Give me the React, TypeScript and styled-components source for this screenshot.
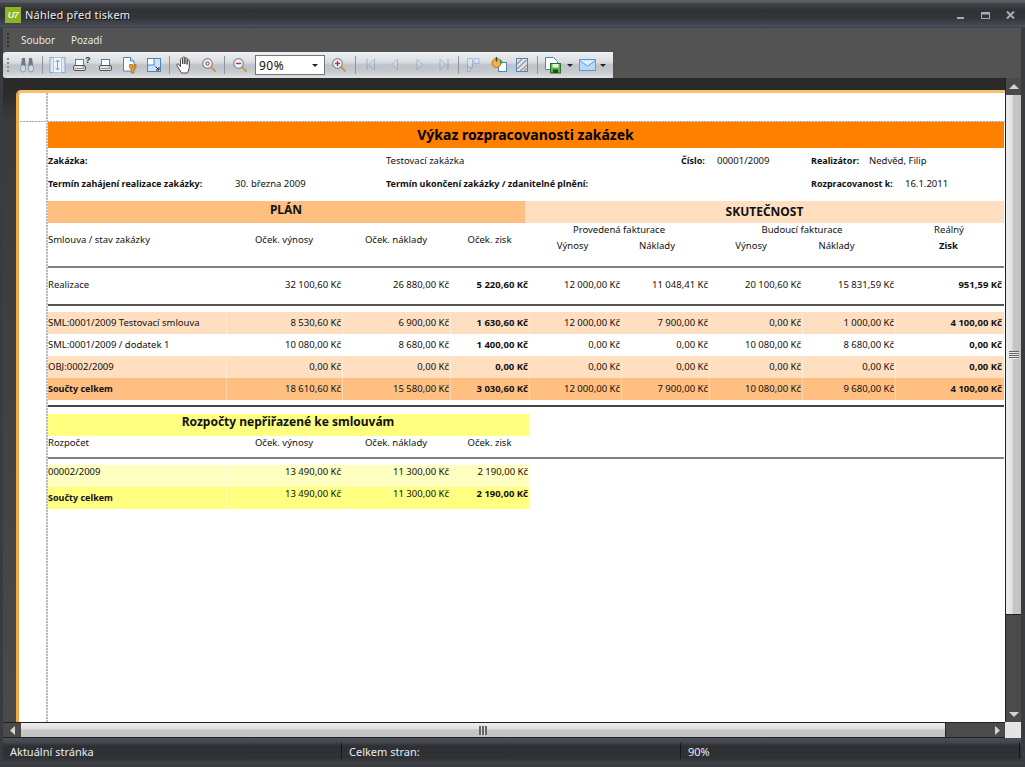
import React from "react";
import styled, { createGlobalStyle, css } from "styled-components";

const Global = createGlobalStyle`
  html, body { margin: 0; padding: 0; background: #35373b; }
  * { box-sizing: border-box; }
`;
const UI = `"Noto Sans", "Open Sans", "DejaVu Sans", sans-serif`;

const Window = styled.div`
  width: 1025px; height: 767px; overflow: hidden; display: flex; flex-direction: column;
  background: #393b40; font-family: ${UI};
`;
const TitleBar = styled.div`
  height: 28px; flex: none; display: flex; align-items: center; padding: 1px 9px 0 5px; gap: 4px;
  background: linear-gradient(180deg, #5b5e64 0, #5b5e64 2px, #44474c 3px, #2f3135 10px, #33353a 18px, #4b4f59 27px, #33353a 28px);
`;
const AppLogo = styled.div`
  width: 16px; height: 16px; background: #8db324; display: flex; align-items: center; justify-content: center;
  font: italic bold 9px "Liberation Sans", sans-serif; color: #f0f3e6; letter-spacing: -0.5px;
`;
const TitleText = styled.div`
  flex: 1; color: #eeeeee; font-size: 11px; letter-spacing: 0.02em; text-shadow: 1px 1px 0 #111;
`;
const WinBtns = styled.div`display: flex; height: 8px; align-items: flex-end; margin-right: 1px;`;
const WinBtn = styled.svg<{ $ml?: number }>`display: block; margin-left: ${(p) => p.$ml ?? 0}px;`;
const Client = styled.div`
  flex: 1; min-height: 0; margin: 0 4px 3px 3px; display: flex; flex-direction: column;
`;
const MenuBar = styled.div`
  height: 24px; flex: none; display: flex; align-items: center; background: #535353;
  color: #e8e8e8; font-size: 10px; padding-left: 18px; gap: 16px; position: relative;
`;
const Grip = styled.div<{ $light?: boolean }>`
  width: 2px; height: 14px; flex: none;
  background: repeating-linear-gradient(180deg, ${(p) => (p.$light ? "#8b8f93" : "#2e2e2e")} 0 2px, transparent 2px 4px);
`;
const MenuGrip = styled(Grip)`position: absolute; left: 4px; top: 5px;`;
const ToolRow = styled.div`height: 26px; flex: none; background: #535353; display: flex;`;
const Toolbar = styled.div`
  width: 610px; height: 26px; display: flex; align-items: center; padding-left: 4px;
  border-radius: 3px 0 0 3px;
  background: linear-gradient(180deg, #eef0f1 0, #dadde0 40%, #bfc3c8 50%, #c6cace 75%, #dfe1e3 100%);
`;
const Tool = styled.div<{ $ml?: number; $off?: boolean }>`
  width: 20px; height: 20px; flex: none; display: flex; align-items: center; justify-content: center;
  margin-left: ${(p) => p.$ml ?? 0}px; opacity: ${(p) => (p.$off ? 0.38 : 1)};
`;
const Sep = styled.div<{ $ml: number }>`
  width: 1px; height: 18px; flex: none; background: #8f9498; margin-left: ${(p) => p.$ml}px;
`;
const Combo = styled.div<{ $ml: number }>`
  width: 70px; height: 20px; flex: none; margin-left: ${(p) => p.$ml}px; background: #fff; border: 1px solid #70767c;
  display: flex; align-items: center; justify-content: space-between; padding: 0 6px 0 3px;
  font-size: 12px; color: #111; letter-spacing: .04em;
`;
const Caret = styled.div<{ $ml?: number }>`
  width: 0; height: 0; flex: none; border: 3px solid transparent; border-top: 3px solid #222; border-bottom: 0;
  margin-left: ${(p) => p.$ml ?? 0}px;
`;
const Body = styled.div`
  flex: 1; min-height: 0; display: grid; grid-template-columns: 1fr 16px; grid-template-rows: 1fr 16px;
`;
const Viewport = styled.div`
  min-height: 0; padding: 12px 0 0 13px; overflow: hidden;
  background: linear-gradient(180deg, #2a2a2a 0, #2a2a2a 12px, #3a3a3a 40px, #4a4a4a 100%);
`;
const Sheet = styled.div`
  position: relative; height: 100%; background: #fff; overflow: hidden;
  border-left: 3px solid #f2a64c; border-top: 3px solid #f6c06c; border-top-left-radius: 5px;
  padding: 29px 0 0 28px;
  &::before { content: ""; position: absolute; left: 27px; top: 0; bottom: 0; width: 2px; z-index: 2;
    background: repeating-linear-gradient(180deg, #bdbdbd 0 2px, #ececec 2px 3px); }
  &::after { content: ""; position: absolute; left: 1px; right: 0; top: 28px; height: 1px; z-index: 2;
    background: repeating-linear-gradient(90deg, #a9a9a9 0 2px, #e4e4e4 2px 3px); }
`;
const Report = styled.div`
  width: 957px; font-family: "Noto Sans", "Open Sans", sans-serif; font-size: 9.5px; color: #111; line-height: 12px;
`;
const Banner = styled.div`
  height: 26px; background: #ff7f00; text-align: center; color: #000; font-size: 14px; font-weight: 700; line-height: 25px;
`;
const InfoGrid = styled.div`
  display: grid; height: 53px; padding-top: 2px; align-items: center;
  grid-template-columns: 188px 151px 295px 36px 94px 58px 36px 99px; grid-template-rows: 22px 23px;
`;
const Info = styled.div<{ $b?: boolean; $c: number; $s?: number; $r: number }>`
  padding-left: ${(p) => (p.$c === 1 ? 1 : 0)}px; white-space: nowrap; font-weight: ${(p) => (p.$b ? 700 : 400)};
  font-size: ${(p) => (p.$b ? 9 : 9.5)}px;
  grid-column: ${(p) => p.$c} / span ${(p) => p.$s ?? 1}; grid-row: ${(p) => p.$r};
`;
const Bands = styled.div`display: flex; height: 22px;`;
const Band = styled.div<{ $w: number; $bg: string; $dy: number }>`
  width: ${(p) => p.$w}px; background: ${(p) => p.$bg}; text-align: center; font-weight: 700; font-size: 12px;
  line-height: ${(p) => p.$dy}px;
`;
const COLS = "179px 116px 108px 79px 92px 88px 93px 93px 108px";
const Head = styled.div`
  display: grid; grid-template-columns: ${COLS}; grid-template-rows: 13px 19px; height: 43px; align-items: center;
`;
const HeadCell = styled.div<{ $c: number; $s?: number; $r: string; $shift?: number; $b?: boolean; $left?: boolean; $dy?: number }>`
  grid-column: ${(p) => p.$c} / span ${(p) => p.$s ?? 1}; grid-row: ${(p) => p.$r};
  text-align: ${(p) => (p.$left ? "left" : "center")}; padding-left: ${(p) => (p.$left ? 1 : 0)}px;
  padding-right: ${(p) => p.$shift ?? 0}px; font-weight: ${(p) => (p.$b ? 700 : 400)};
  padding-top: ${(p) => p.$dy ?? 0}px; white-space: nowrap;
`;
const Rule = styled.div<{ $c?: string; $mt?: number; $mb?: number }>`
  height: 2px; background: ${(p) => p.$c ?? "#808080"}; margin-top: ${(p) => p.$mt ?? 0}px; margin-bottom: ${(p) => p.$mb ?? 0}px;
`;
const Row = styled.div<{ $bg?: string; $h?: number; $n?: number; $pb?: number }>`
  display: grid; grid-template-columns: ${(p) => (p.$n === 4 ? "179px 116px 108px 79px" : COLS)};
  width: ${(p) => (p.$n === 4 ? "482px" : "auto")}; height: ${(p) => p.$h ?? 22}px; background: ${(p) => p.$bg ?? "transparent"};
  padding-bottom: ${(p) => p.$pb ?? 0}px;
`;
const Cell = styled.div<{ $num?: boolean; $b?: boolean; $top?: boolean; $sep?: boolean }>`
  display: flex; align-items: ${(p) => (p.$top ? "flex-start" : "center")}; white-space: nowrap;
  justify-content: ${(p) => (p.$num ? "flex-end" : "flex-start")};
  padding: ${(p) => (p.$top ? "1px" : "0")} ${(p) => (p.$num ? "1px" : "0")} 0 1px;
  font-weight: ${(p) => (p.$b ? 700 : 400)};
  font-size: ${(p) => (p.$b && !p.$num ? 9 : 9.5)}px;
  ${(p) => p.$sep && css`border-left: 1px solid rgba(255,255,255,.35);`}
`;
const YellowBand = styled.div`
  width: 482px; height: 22px; background: #ffff80; text-align: center; font-weight: 700; font-size: 12px; line-height: 16px;
`;
const YellowHead = styled.div`
  display: grid; grid-template-columns: 179px 116px 108px 79px; width: 482px; height: 13px; line-height: 13px;
`;
const VScroll = styled.div`display: flex; flex-direction: column; background: #4b4b4b; border-left: 1px solid #222;`;
const SBtn = styled.div`
  height: 17px; flex: none; display: flex; align-items: center; justify-content: center; background: #4a4a4a;
`;
const VThumb = styled.div`
  flex: 1; display: flex; align-items: center; justify-content: center; border-bottom: 1px solid #222;
  background: linear-gradient(90deg, #ededed 0, #e2e2e2 40%, #c6c6c6 50%, #c2c2c2 100%);
`;
const VTrack = styled.div`height: 107px; flex: none; background: #4b4b4b; display: flex; align-items: flex-end; justify-content: center; padding-bottom: 5px;`;
const HScroll = styled.div`
  display: flex; background: #4b4b4b; border-top: 1px solid #222; border-bottom: 1px solid #222;
`;
const HBtn = styled.div`width: 18px; flex: none; display: flex; align-items: center; justify-content: center; background: #4a4a4a;`;
const HThumb = styled.div`
  width: 925px; flex: none; display: flex; align-items: center; justify-content: center;
  background: linear-gradient(180deg, #ededed 0, #e2e2e2 40%, #c6c6c6 50%, #c2c2c2 100%); border-right: 1px solid #222;
`;
const HEnd = styled.div`flex: 1; display: flex; align-items: center; justify-content: flex-end; padding-right: 5px;`;
const GripLines = styled.div<{ $v?: boolean }>`
  ${(p) => p.$v
    ? css`width: 10px; height: 8px; background: repeating-linear-gradient(180deg, #666 0 1px, #e8e8e8 1px 2px);`
    : css`width: 8px; height: 9px; background: repeating-linear-gradient(90deg, #666 0 2px, #ddd 2px 3px);`}
`;
const Corner = styled.div`background: #e4e4e4;`;
const StatusBar = styled.div`
  height: 26px; flex: none; display: grid; grid-template-columns: 339px 339px 339px; align-items: center;
  background: linear-gradient(180deg, #4c4f5a 0, #44474f 4px, #2e3034 8px, #2f3135 20px, #3e4147 25px);
  color: #e8edf2; font-size: 11px;
`;
const StatusCell = styled.div`
  height: 16px; display: flex; align-items: center; padding-left: 7px; border-right: 1px solid #15161a;
`;

const Arrow = ({ d }: { d: "u" | "d" | "l" | "r" }) => {
  const p = { u: "0,5 5,0 10,5", d: "0,0 5,5 10,0", l: "5,0 5,9 0,4.5", r: "0,0 0,9 5,4.5" }[d];
  const w = d === "u" || d === "d" ? 10 : 5;
  const h = d === "u" || d === "d" ? 5 : 9;
  return <svg width={w} height={h}><polygon points={p} fill="#d4d4d4" /></svg>;
};

const Sv = ({ children }: { children: React.ReactNode }) => (
  <svg width="20" height="20" viewBox="0 0 20 20" style={{ overflow: "visible" }}>{children}</svg>
);
const B = "#4a86c6";
const Mag = ({ sign }: { sign: "+" | "-" | "o" }) => (
  <Sv>
    <line x1="12" y1="12" x2="16" y2="16" stroke="#d09a40" strokeWidth="2.2" strokeLinecap="round" />
    <circle cx="8.5" cy="8.5" r="4.8" fill="#eef2f6" stroke="#7d8c9c" strokeWidth="1.2" />
    {sign === "o" ? <circle cx="8.5" cy="8.5" r="1.6" fill="none" stroke="#c86060" strokeWidth="1.2" /> : <line x1="6" y1="8.5" x2="11" y2="8.5" stroke="#c03030" strokeWidth="1.4" />}
    {sign === "+" && <line x1="8.5" y1="6" x2="8.5" y2="11" stroke="#c03030" strokeWidth="1.4" />}
  </Sv>
);
const Printer = ({ q }: { q?: boolean }) => (
  <Sv>
    <rect x="5.5" y="4.5" width="8" height="6" fill="#fff" stroke={B} />
    <rect x="3.5" y="10.5" width="12" height="5" rx="1.5" fill="#e4e6e8" stroke="#4c5258" />
    <rect x="5" y="13" width="9" height="1" fill="#8c9298" />
    <rect x="12.5" y="11.5" width="2" height="1" fill="#3aa040" />
    {q && <text x="15" y="8" fontSize="9" fontWeight="700" fontFamily="Liberation Sans" fill="#333">?</text>}
  </Sv>
);
const Nav = ({ dir, bar }: { dir: "l" | "r"; bar?: boolean }) => (
  <Sv>
    <polygon points={dir === "l" ? "13.5,4 13.5,15 8,9.5" : "7,4 7,15 12.5,9.5"} fill="#d3dde6" stroke={B} />
    {bar && <line x1={dir === "l" ? 6 : 15} y1="4" x2={dir === "l" ? 6 : 15} y2="15" stroke={B} strokeWidth="1.2" />}
  </Sv>
);

const money = [
  ["SML:0001/2009 Testovací smlouva", "8 530,60 Kč", "6 900,00 Kč", "1 630,60 Kč", "12 000,00 Kč", "7 900,00 Kč", "0,00 Kč", "1 000,00 Kč", "4 100,00 Kč"],
  ["SML:0001/2009 / dodatek 1", "10 080,00 Kč", "8 680,00 Kč", "1 400,00 Kč", "0,00 Kč", "0,00 Kč", "10 080,00 Kč", "8 680,00 Kč", "0,00 Kč"],
  ["OBJ:0002/2009", "0,00 Kč", "0,00 Kč", "0,00 Kč", "0,00 Kč", "0,00 Kč", "0,00 Kč", "0,00 Kč", "0,00 Kč"],
  ["Součty celkem", "18 610,60 Kč", "15 580,00 Kč", "3 030,60 Kč", "12 000,00 Kč", "7 900,00 Kč", "10 080,00 Kč", "9 680,00 Kč", "4 100,00 Kč"],
];
const bgs = ["#ffdfbf", "transparent", "#ffdfbf", "#ffbf80"];
const BOLD = new Set([3, 8]);

const FullRow = ({ cells, bg, h, all, pb }: { cells: string[]; bg?: string; h?: number; all?: boolean; pb?: number }) => (
  <Row $bg={bg} $h={h} $pb={pb}>
    {cells.map((c, i) => (
      <Cell key={i} $num={i > 0} $b={BOLD.has(i) || (all && i === 0)} $sep={i > 0 && !!bg && bg !== "transparent"}>{c}</Cell>
    ))}
  </Row>
);

export default function App() {
  return (
    <Window>
      <Global />
      <TitleBar>
        <AppLogo>U7</AppLogo>
        <TitleText>Náhled před tiskem</TitleText>
        <WinBtns>
          <WinBtn width="7" height="2"><rect width="7" height="2" fill="#a6adb5" /></WinBtn>
          <WinBtn $ml={17} width="9" height="7"><rect x=".5" y=".5" width="8" height="6" fill="none" stroke="#a6adb5" /><rect width="9" height="2.5" fill="#a6adb5" /></WinBtn>
          <WinBtn $ml={16} width="9" height="8" viewBox="0 0 9 8"><path d="M1 0.5 L8 7.5 M8 0.5 L1 7.5" stroke="#a6adb5" strokeWidth="2" /></WinBtn>
        </WinBtns>
      </TitleBar>
      <Client>
        <MenuBar>
          <MenuGrip />
          <span>Soubor</span>
          <span>Pozadí</span>
        </MenuBar>
        <ToolRow>
          <Toolbar>
            <Grip $light />
            <Tool $ml={8}>
              <Sv>
                <path d="M5 3 h3 l.8 8 h-5z M12 3 h3 l1.200 8 h-5z" fill="#74797f" />
                <rect x="3.500" y="10" width="5" height="7" rx="2.500" fill="#c4daf0" stroke="#8c9cac" />
                <rect x="11.500" y="10" width="5" height="7" rx="2.500" fill="#c4daf0" stroke="#8c9cac" />
              </Sv>
            </Tool>
            <Sep $ml={5} />
            <Tool $ml={5}>
              <Sv>
                <rect x="2" y="2.500" width="15" height="15" fill="#dfe9f3" stroke="#7fa9d2" />
                <rect x="5.500" y="2.500" width="8" height="15" fill="#f0f5fa" stroke="#a8c6e2" />
                <path d="M9.500 5 v10 M7.500 7 l2-2 2 2 M7.500 13 l2 2 2-2" fill="none" stroke="#6f9fcc" />
              </Sv>
            </Tool>
            <Tool $ml={2}><Printer q /></Tool>
            <Tool $ml={6}><Printer /></Tool>
            <Tool $ml={4}>
              <Sv>
                <path d="M3.500 2.500 h7 l3.500 3.500 v10 h-10.500z" fill="#fff" stroke={B} />
                <path d="M10.500 2.500 v3.500 h3.500" fill="#d8e6f4" stroke={B} />
                <path d="M9.500 9.500 v3 a2.500 2.500 0 0 0 2 2 v3.500 h2.500 v-3.500 a2.500 2.500 0 0 0 2-2 v-3 h-1.500 v2.500 h-2 v-2.500z" fill="#e8a020" stroke="#a06810" strokeWidth=".7" />
              </Sv>
            </Tool>
            <Tool $ml={4}>
              <Sv>
                <rect x="3.500" y="3.500" width="13" height="13" fill="#cfe2f5" stroke={B} />
                <rect x="3.500" y="3.500" width="6.500" height="6.500" fill="#fff" stroke={B} />
                <path d="M11.500 11.500 l3 3 M15 12 v3 h-3" fill="none" stroke="#222" />
              </Sv>
            </Tool>
            <Sep $ml={5} />
            <Tool $ml={5}>
              <Sv>
                <path d="M6.500 18 l-4.500-7.500 c-.7-1.500 1-2.200 1.900-1 l1.600 2.200 V4.500 c0-1.500 2.200-1.500 2.200 0 V9 V3 c0-1.500 2.200-1.500 2.200 0 V9 V3.800 c0-1.500 2.200-1.500 2.200 0 V9.500 V5.800 c0-1.500 2.200-1.500 2.200 0 V13 l-1.800 5z" fill="#fff" stroke="#3a3a3a" strokeWidth=".9" strokeLinejoin="round" />
              </Sv>
            </Tool>
            <Tool $ml={4}><Mag sign="o" /></Tool>
            <Sep $ml={5} />
            <Tool $ml={5}><Mag sign="-" /></Tool>
            <Combo $ml={5}>90%<Caret /></Combo>
            <Tool $ml={4}><Mag sign="+" /></Tool>
            <Sep $ml={6} />
            <Tool $ml={5} $off><Nav dir="l" bar /></Tool>
            <Tool $ml={3} $off><Nav dir="l" /></Tool>
            <Tool $ml={6} $off><Nav dir="r" /></Tool>
            <Tool $ml={3} $off><Nav dir="r" bar /></Tool>
            <Sep $ml={5} />
            <Tool $ml={4} $off>
              <Sv>
                <path d="M4.500 3.500 h5 v9 h-5z M11 3.500 h5 v5 h-5z" fill="#e6edf4" stroke={B} />
                <path d="M4.500 12.500 h3 v4 h-3z" fill="#e6edf4" stroke={B} />
              </Sv>
            </Tool>
            <Tool $ml={6}>
              <Sv>
                <rect x="9.500" y="7.500" width="8" height="9" fill="#fff" stroke={B} />
                <circle cx="7.500" cy="8" r="4.500" fill="#f2b040" stroke="#b87818" />
                <line x1="7.500" y1="2" x2="7.500" y2="6.500" stroke="#444" strokeWidth="1.400" />
                <path d="M11 4 l3 3 -3 3z" fill="#3f9a40" />
              </Sv>
            </Tool>
            <Tool $ml={3}>
              <Sv>
                <rect x="4.500" y="3.500" width="11" height="13" fill="#e6e6e6" stroke={B} />
                <path d="M5 9 L10 4 M5 14 L14.500 5 M8 16 L15 10 M12 16 L15 13" stroke="#9a9a9a" strokeWidth="1.500" />
              </Sv>
            </Tool>
            <Sep $ml={5} />
            <Tool $ml={5}>
              <Sv>
                <path d="M2.500 2.500 h8 l4 4 v8 h-12z" fill="#fff" stroke={B} />
                <rect x="7.500" y="8.500" width="10" height="9.500" fill="#5cb848" stroke="#2c6c24" />
                <rect x="9.500" y="9" width="6" height="3.500" fill="#e8f4e4" />
                <rect x="10" y="14.500" width="5" height="3.500" fill="#20481c" />
              </Sv>
            </Tool>
            <Caret $ml={4} />
            <Tool $ml={4}>
              <Sv>
                <rect x="2.500" y="4.500" width="16" height="11" fill="#b8d8f4" stroke="#5a9ad8" />
                <path d="M2.500 5.500 l8 5.500 8-5.500" fill="#e0f0fc" stroke="#5a9ad8" />
              </Sv>
            </Tool>
            <Caret $ml={3} />
          </Toolbar>
        </ToolRow>
        <Body>
          <Viewport>
            <Sheet>
              <Report>
                <Banner>Výkaz rozpracovanosti zakázek</Banner>
                <InfoGrid>
                  <Info $b $c={1} $r={1}>Zakázka:</Info>
                  <Info $c={3} $r={1}>Testovací zakázka</Info>
                  <Info $b $c={4} $r={1}>Číslo:</Info>
                  <Info $c={5} $r={1}>00001/2009</Info>
                  <Info $b $c={6} $r={1}>Realizátor:</Info>
                  <Info $c={7} $s={2} $r={1}>Nedvěd, Filip</Info>
                  <Info $b $c={1} $r={2}>Termín zahájení realizace zakázky:</Info>
                  <Info $c={2} $r={2}>30. března 2009</Info>
                  <Info $b $c={3} $s={3} $r={2}>Termín ukončení zakázky / zdanitelné plnění:</Info>
                  <Info $b $c={6} $s={2} $r={2}>Rozpracovanost k:</Info>
                  <Info $c={8} $r={2}>16.1.2011</Info>
                </InfoGrid>
                <Bands>
                  <Band $w={478} $bg="#ffbf80" $dy={17}>PLÁN</Band>
                  <Band $w={479} $bg="#ffdfbf" $dy={21}>SKUTEČNOST</Band>
                </Bands>
                <Head>
                  <HeadCell $left $c={1} $r="1 / span 2" $dy={2}>Smlouva / stav zakázky</HeadCell>
                  <HeadCell $c={2} $r="1 / span 2" $dy={2}>Oček. výnosy</HeadCell>
                  <HeadCell $c={3} $r="1 / span 2" $dy={2}>Oček. náklady</HeadCell>
                  <HeadCell $c={4} $r="1 / span 2" $dy={2}>Oček. zisk</HeadCell>
                  <HeadCell $c={5} $s={2} $r="1">Provedená fakturace</HeadCell>
                  <HeadCell $c={7} $s={2} $r="1">Budoucí fakturace</HeadCell>
                  <HeadCell $c={9} $r="1">Reálný</HeadCell>
                  <HeadCell $c={5} $r="2" $shift={5}>Výnosy</HeadCell>
                  <HeadCell $c={6} $r="2" $shift={16}>Náklady</HeadCell>
                  <HeadCell $c={7} $r="2" $shift={9}>Výnosy</HeadCell>
                  <HeadCell $c={8} $r="2" $shift={24}>Náklady</HeadCell>
                  <HeadCell $b $c={9} $r="2" $shift={1}>Zisk</HeadCell>
                </Head>
                <Rule />
                <FullRow h={36} pb={2} cells={["Realizace", "32 100,60 Kč", "26 880,00 Kč", "5 220,60 Kč", "12 000,00 Kč", "11 048,41 Kč", "20 100,60 Kč", "15 831,59 Kč", "951,59 Kč"]} />
                <Rule $c="#555" $mb={6} />
                {money.map((r, i) => <FullRow key={i} cells={r} bg={bgs[i]} all={i === 3} />)}
                <Rule $c="#444" $mt={5} $mb={7} />
                <YellowBand>Rozpočty nepřiřazené ke smlouvám</YellowBand>
                <YellowHead>
                  <Cell>Rozpočet</Cell>
                  <HeadCell $c={2} $r="1">Oček. výnosy</HeadCell>
                  <HeadCell $c={3} $r="1">Oček. náklady</HeadCell>
                  <HeadCell $c={4} $r="1">Oček. zisk</HeadCell>
                </YellowHead>
                <Rule $mt={8} $mb={6} />
                <Row $n={4} $bg="#ffffc0">
                  <Cell $top>00002/2009</Cell>
                  <Cell $num $top $sep>13 490,00 Kč</Cell>
                  <Cell $num $top>11 300,00 Kč</Cell>
                  <Cell $num $top>2 190,00 Kč</Cell>
                </Row>
                <Row $n={4} $bg="#ffff80">
                  <Cell $b>Součty celkem</Cell>
                  <Cell $num $top $sep>13 490,00 Kč</Cell>
                  <Cell $num $top>11 300,00 Kč</Cell>
                  <Cell $num $top $b>2 190,00 Kč</Cell>
                </Row>
              </Report>
            </Sheet>
          </Viewport>
          <VScroll>
            <SBtn><Arrow d="u" /></SBtn>
            <VThumb><GripLines $v /></VThumb>
            <VTrack><Arrow d="d" /></VTrack>
          </VScroll>
          <HScroll>
            <HBtn><Arrow d="l" /></HBtn>
            <HThumb><GripLines /></HThumb>
            <HEnd><Arrow d="r" /></HEnd>
          </HScroll>
          <Corner />
        </Body>
        <StatusBar>
          <StatusCell>Aktuální stránka</StatusCell>
          <StatusCell>Celkem stran:</StatusCell>
          <StatusCell>90%</StatusCell>
        </StatusBar>
      </Client>
    </Window>
  );
}
